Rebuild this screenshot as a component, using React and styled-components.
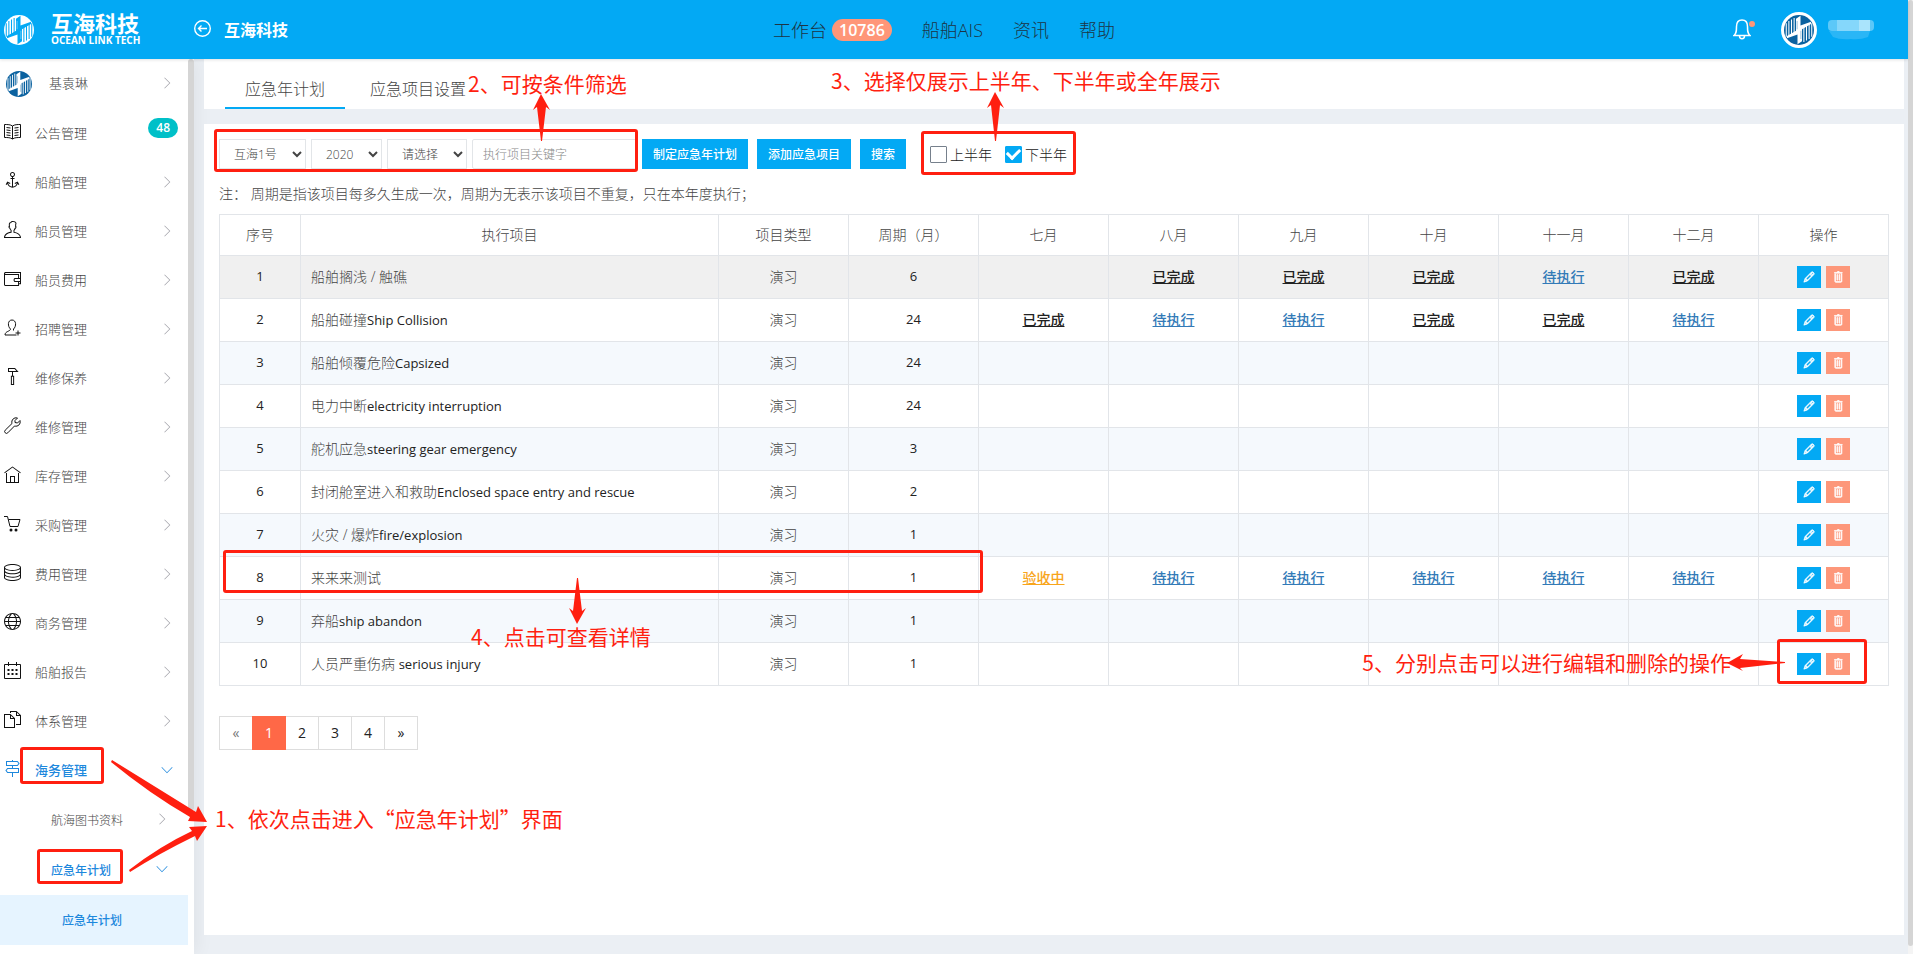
import React, { useState } from "react";
import styled, { createGlobalStyle, css } from "styled-components";
import {
    TfiAnchor,
    TfiAngleDown,
    TfiAngleRight,
    TfiDirectionAlt,
    TfiFiles,
    TfiHome,
    TfiHummer,
    TfiPencil,
    TfiServer,
    TfiTrash,
    TfiUser,
    TfiWallet,
    TfiWorld,
} from "react-icons/tfi";

const GlobalStyle = createGlobalStyle`
    * {
        box-sizing: border-box;
    }

    body {
        margin: 0;
        background-color: #ebeff4;
        color: #444;
        font-family: "Open Sans", "Noto Sans CJK SC", sans-serif;
        font-size: 14px;
        font-weight: 300;
    }

    a {
        color: inherit;
        text-decoration: none;
    }

    button, input, select {
        font-family: inherit;
        font-weight: inherit;
    }
`;

const Page = styled.div`
    position: relative;
    display: flex;
    min-height: 100vh;
`;

const Screen = styled.div`
    display: flex;
    flex: 1;
    flex-direction: column;
    min-width: 0;
`;

const PageTrack = styled.div`
    display: flex;
    width: 5px;
    padding-bottom: 8px;
    background-color: #f4f4f4;
`;

const SideTrack = styled.div`
    width: 6px;
`;

const TrackThumb = styled.div`
    flex: 1;
    height: ${({ $size }) => $size};
    border-radius: 3px;
    background-color: #d5d5d5;
`;

/* header */

const Header = styled.header`
    position: relative;
    z-index: 2;
    display: grid;
    grid-template-columns: 1fr auto 1fr;
    align-items: center;
    height: 59px;
    padding-right: 20px;
    background-color: #03a9f4;
    box-shadow: 0 1px 3px rgba(0, 0, 0, 0.12);
`;

const HeaderLeft = styled.div`
    display: flex;
    align-items: center;
    color: white;
`;

const Brand = styled.a`
    display: flex;
    align-items: center;
    width: 194px;
    padding-left: 4px;
    gap: 17px;
`;

const BrandName = styled.span`
    display: flex;
    flex-direction: column;
    font-size: 22px;
    font-weight: 700;
    line-height: 20px;

    small {
        font-size: 10px;
        line-height: 14px;
        white-space: nowrap;
    }
`;

const BackLink = styled.a`
    display: flex;
    align-items: center;
    gap: 13px;
    padding-bottom: 2px;
    font-size: 16px;
    font-weight: 700;
`;

const HeaderNav = styled.nav`
    display: flex;
    gap: 30px;
    padding-bottom: 2px;
    color: #1d3444;
    font-size: 18px;

    a {
        display: flex;
        align-items: center;
        gap: 5px;
    }
`;

const CountBadge = styled.span`
    margin-top: 2px;
    padding: 0 7px;
    border-radius: 11px;
    background-color: #ff9678;
    color: white;
    font-size: 16px;
    font-weight: 600;
    line-height: 22px;
`;

const HeaderRight = styled.div`
    display: flex;
    align-items: center;
    justify-content: flex-end;
    padding-right: 14px;
    color: white;
`;

const BellButton = styled.button`
    position: relative;
    display: flex;
    margin-right: 30px;
    padding: 0;
    border: 0;
    background: none;
    color: white;

    &::after {
        content: "";
        position: absolute;
        top: 2px;
        right: -4px;
        width: 6px;
        height: 6px;
        border-radius: 50%;
        background-color: #ff9678;
    }
`;

const Avatar = styled.span`
    display: flex;
    margin-right: 11px;
    border: 3px solid white;
    border-radius: 50%;
    background-color: white;
`;

/* side menu */

const Body = styled.div`
    display: flex;
    flex: 1;
`;

const Sidebar = styled.aside`
    display: flex;
    width: 194px;
    background-color: white;
    box-shadow: 4px 0 16px rgba(0, 0, 0, 0.05);
`;

const Menu = styled.nav`
    flex: 1;
`;

const MenuLabel = styled.span`
    flex: 1;
`;

const MenuItem = styled.a`
    display: flex;
    align-items: center;
    height: 50px;
    padding: 0 15px 0 4px;
    font-size: 13px;

    ${MenuLabel} {
        padding-bottom: 4px;
    }

    ${({ $level }) => $level === 1 && css`
        height: 49px;

        ${MenuLabel} {
            padding-bottom: 2px;
        }
    `}

    ${({ $level }) => $level > 1 && css`
        padding: 0 20px 0 ${$level === 2 ? 51 : 62}px;
        font-size: 12px;

        ${MenuLabel} {
            padding: 0;
        }
    `}

    ${({ $active }) => $active && css`
        color: #1e88dd;
        font-weight: 500;
    `}

    ${({ $selected }) => $selected && css`
        background-color: #e6f4ff;
    `}
`;

const MenuIcon = styled.span`
    display: flex;
    width: 31px;
    padding-bottom: 4px;
    color: ${({ $active }) => ($active ? "#1e88dd" : "#111")};
`;

const UserLogo = styled.span`
    display: flex;
    width: 45px;
    padding-left: 2px;
`;

const MenuArrow = styled.span`
    display: flex;
    padding-bottom: 2px;
    color: ${({ $active }) => ($active ? "#1e88dd" : "#a4a4ac")};
`;

const MenuBadge = styled.span`
    margin: 0 -5px 12px 0;
    padding: 0 8px;
    border-radius: 10px;
    background-color: #00c0c8;
    color: white;
    font-size: 12px;
    font-weight: 600;
    line-height: 20px;
`;

/* content */

const Content = styled.main`
    display: flex;
    flex: 1;
    flex-direction: column;
    gap: 15px;
    min-width: 0;
    padding: 0 4px 19px 10px;
`;

const Tabs = styled.div`
    display: flex;
    gap: 5px;
    height: 50px;
    padding-left: 21px;
    background-color: white;
`;

const Tab = styled.button`
    padding: 10px 20px 0;
    border: 0;
    border-bottom: 2px solid ${({ $active }) => ($active ? "#03a9f4" : "transparent")};
    background: none;
    color: #444;
    font-size: 16px;
`;

const Card = styled.section`
    flex: 1;
    padding: 15px;
    background-color: white;
`;

const Toolbar = styled.form`
    display: flex;
    align-items: center;
    gap: 5px;
`;

const Select = styled.select`
    width: ${({ $width }) => $width}px;
    height: 30px;
    padding: 0 0 0 10px;
    border: 1px solid #e2e5e8;
    border-radius: 0;
    background-color: white;
    color: #444;
    font-size: 12px;
`;

const KeywordInput = styled.input`
    width: 165px;
    height: 30px;
    padding: 0 10px;
    border: 1px solid #e2e5e8;
    border-radius: 2px;
    font-size: 12px;

    &::placeholder {
        color: #888;
    }
`;

const ButtonGroup = styled.div`
    display: flex;
    gap: 9px;
    margin-right: 19px;
`;

const PrimaryButton = styled.button`
    height: 30px;
    padding: 0 11px;
    border: 0;
    background-color: #03a9f4;
    color: white;
    font-size: 12px;
    font-weight: 500;
`;

const CheckLabel = styled.label`
    display: flex;
    align-items: center;
    gap: 3px;
    margin-right: 8px;
    color: #222;
`;

const CheckBox = styled.input`
    appearance: none;
    display: grid;
    place-items: center;
    width: 17px;
    height: 17px;
    margin: 0;
    border: 1px solid #76808c;
    border-radius: 1px;
    background-color: white;

    &:checked {
        border-color: #03a9f4;
        background-color: #03a9f4;
    }

    &:checked::after {
        content: "";
        width: 10px;
        height: 6px;
        margin-bottom: 3px;
        border: solid white;
        border-width: 0 0 3px 3px;
        transform: rotate(-45deg);
    }
`;

const Note = styled.p`
    margin: 15px 0 10px;
    line-height: 20px;
`;

const PlanTable = styled.table`
    width: 100%;
    border-collapse: collapse;
    table-layout: fixed;

    th, td {
        padding: 0 0 2px;
        border: 1px solid #e2e5e9;
        text-align: center;
    }

    th {
        height: 41px;
        font-weight: inherit;
    }

    td {
        height: 43px;
        padding-bottom: 3px;
    }

    td:nth-child(2) {
        padding-left: 10px;
        text-align: left;
    }

    td:last-child {
        padding: 0;
    }

    tbody tr:nth-child(odd) {
        background-color: #f5f9fd;
    }

    tbody tr:first-child {
        background-color: #f0f0f0;
    }
`;

const Figure = styled.td`
    color: #222;
    font-size: 13px;
    font-weight: 400;
`;

const Latin = styled.span`
    color: #222;
    font-size: 13px;
    font-weight: 400;
`;

const StatusLink = styled.a`
    color: ${({ $color }) => $color};
    font-weight: 500;
    text-decoration: underline;
`;

const Actions = styled.div`
    display: flex;
    justify-content: center;
    gap: 5px;
`;

const ActionButton = styled.button`
    display: flex;
    align-items: center;
    justify-content: center;
    width: 24px;
    height: 22px;
    padding: 0;
    border: 0;
    background-color: ${({ $color }) => $color};
    color: white;

    svg {
        stroke: white;
        stroke-width: 1;
    }
`;

const Pagination = styled.nav`
    display: flex;
    margin-top: 30px;
`;

const PageLink = styled.a`
    width: 34px;
    margin-right: -1px;
    border: 1px solid #ddd;
    color: ${({ $muted }) => ($muted ? "#777" : "#222")};
    font-weight: 400;
    line-height: 32px;
    text-align: center;

    ${({ $active }) => $active && css`
        position: relative;
        border-color: #ff6847;
        background-color: #ff6847;
        color: white;
    `}
`;

/* guide marks lying over the page */

const Guide = styled.div`
    position: absolute;
    inset: 0;
    z-index: 3;
    overflow: hidden;
    color: #ff1f10;
    font-family: "Noto Sans CJK SC", sans-serif;
    font-size: 21px;
    font-weight: 400;
    line-height: 30px;
    pointer-events: none;
`;

const place = css`
    position: absolute;
    top: ${({ $top }) => $top}px;
    ${({ $left, $right }) => ($right === undefined ? `left: ${$left}px;` : `right: ${$right}px;`)}
`;

const GuideBox = styled.div`
    ${place}
    width: ${({ $width }) => $width}px;
    height: ${({ $height }) => $height}px;
    border: 3px solid #ff1f10;
    border-radius: 3px;
`;

const GuideText = styled.p`
    ${place}
    margin: 0;
    white-space: nowrap;
`;

const GuideArrow = styled.svg`
    ${place}
    fill: #ff1f10;
`;

/* icons that the package draws differently or lacks */

const LineIcon = ({ size = 17, strokeWidth = 1, children }) => (
    <svg width={size} height={size} viewBox="0 0 17 17" fill="none" stroke="currentColor" strokeWidth={strokeWidth}>
        {children}
    </svg>
);

const BookIcon = () => (
    <LineIcon>
        <path d="M8.500 3C6.500 1.500 3.500 1.500 .5 1.500V14.500C3.500 14.500 6.500 14.500 8.500 16C10.500 14.500 13.500 14.500 16.500 14.500V1.500C13.500 1.500 10.500 1.500 8.500 3ZM8.500 3V16" />
        <path d="M2.500 4.500L6.500 5M2.500 7L6.500 7.500M2.500 9.500L6.500 10M2.500 12L6.500 12.500M14.500 4.500L10.500 5M14.500 7L10.500 7.500M14.500 9.500L10.500 10M14.500 12L10.500 12.500" />
    </LineIcon>
);

const UserPlusIcon = () => (
    <LineIcon>
        <path d="M9.500 11.500V10C12.500 7.500 12.500 1 8 1S3.500 7.500 6.500 10C6.500 12.500 1 12 1 16H12.500M14 11.500V16.500M11.500 14H16.500" />
    </LineIcon>
);

const WrenchIcon = () => (
    <LineIcon>
        <path d="M13.500 1C10 0 7 3 8 6.500L1.200 13.200A1.800 1.800 0 0 0 3.800 15.800L10.500 9C14 10 17 7 16 3.500L13.500 6L11 5.500V3.500Z" />
    </LineIcon>
);

const CartIcon = () => (
    <LineIcon>
        <path d="M0 1.500H3.500L6 11.500H14L16 4.500H4.500" />
        <circle cx="7" cy="15" r="1.500" fill="currentColor" stroke="none" />
        <circle cx="12" cy="15" r="1.500" fill="currentColor" stroke="none" />
    </LineIcon>
);

const CalendarIcon = () => (
    <LineIcon>
        <path d="M.5 2.500H16.500V16.500H.5ZM4.500 0V4M12.500 0V4" />
        <path d="M3.500 8H13.500M3.500 12H13.500" strokeWidth="2" strokeDasharray="2 2" />
    </LineIcon>
);

const BackIcon = () => (
    <LineIcon strokeWidth={1.4}>
        <circle cx="8.500" cy="8.500" r="7.800" />
        <path d="M13 8.500H4.500M7.500 5.500L4.500 8.500L7.500 11.500" />
    </LineIcon>
);

const BellIcon = () => (
    <svg width="18" height="21" viewBox="0 0 18 21" fill="none" stroke="currentColor" strokeWidth="1.500">
        <path d="M1 16.500C3.500 14.500 3.500 12 3.500 7.500C3.500 3.500 5.500 1 9 1S14.500 3.500 14.500 7.500C14.500 12 14.500 14.500 17 16.500ZM6.500 17C6.500 20.500 11.500 20.500 11.500 17" />
    </svg>
);

const Logo = ({ size, color = "#0b62a0", background = "white" }) => (
    <svg width={size} height={size} viewBox="0 0 40 40" aria-hidden="true">
        <circle cx="20" cy="20" r="20" fill={color} />
        <path
            d="M3 11V29M6.500 8V28M10 6V26M13.500 4V25M37 29V11M33.500 32V12M30 34V14M26.500 36V15"
            fill="none"
            stroke={background}
            strokeWidth="1.400"
        />
        <path d="M16 5L22 1V14L36 9V12L24 19V35L18 39V26L4 31V28L16 21Z" fill={background} />
        <path d="M17.500 19V8M22.500 21V32" stroke={color} strokeWidth="1" opacity="0.500" />
    </svg>
);

const MaskedName = () => (
    <svg width="46" height="20" viewBox="0 0 46 20" aria-hidden="true">
        <rect width="46" height="11" rx="4" fill="#5cc8f8" />
        <rect x="9" width="22" height="11" fill="#85d7fb" />
        <rect x="31" width="11" height="11" fill="#aae4fc" />
        <path d="M1 11H42L40 17Q32 20 23 19Q12 20 5 17Z" fill="#2ab6f6" />
    </svg>
);

const ItemArrow = ({ open, active }) => (
    <MenuArrow $active={active}>
        {open ? <TfiAngleDown size={12} /> : <TfiAngleRight size={12} />}
    </MenuArrow>
);

const menuItems = [
    { label: "公告管理", icon: BookIcon, badge: 48 },
    { label: "船舶管理", icon: TfiAnchor },
    { label: "船员管理", icon: TfiUser },
    { label: "船员费用", icon: TfiWallet },
    { label: "招聘管理", icon: UserPlusIcon },
    { label: "维修保养", icon: TfiHummer },
    { label: "维修管理", icon: WrenchIcon },
    { label: "库存管理", icon: TfiHome },
    { label: "采购管理", icon: CartIcon },
    { label: "费用管理", icon: TfiServer },
    { label: "商务管理", icon: TfiWorld },
    { label: "船舶报告", icon: CalendarIcon },
    { label: "体系管理", icon: TfiFiles },
    { label: "海务管理", icon: TfiDirectionAlt, active: true },
];

const columns = ["序号", "执行项目", "项目类型", "周期（月）", "七月", "八月", "九月", "十月", "十一月", "十二月", "操作"];

const STATUS = {
    done: { label: "已完成", color: "#222" },
    todo: { label: "待执行", color: "#337ab7" },
    check: { label: "验收中", color: "#f8a51b" },
};

const noStatus = ["", "", "", "", "", ""];

const plans = [
    { name: "船舶搁浅 / 触礁", cycle: 6, months: ["", "done", "done", "done", "todo", "done"] },
    { name: "船舶碰撞", latin: "Ship Collision", cycle: 24, months: ["done", "todo", "todo", "done", "done", "todo"] },
    { name: "船舶倾覆危险", latin: "Capsized", cycle: 24, months: noStatus },
    { name: "电力中断", latin: "electricity interruption", cycle: 24, months: noStatus },
    { name: "舵机应急", latin: "steering gear emergency", cycle: 3, months: noStatus },
    { name: "封闭舱室进入和救助", latin: "Enclosed space entry and rescue", cycle: 2, months: noStatus },
    { name: "火灾 / 爆炸", latin: "fire/explosion", cycle: 1, months: noStatus },
    { name: "来来来测试", cycle: 1, months: ["check", "todo", "todo", "todo", "todo", "todo"] },
    { name: "弃船", latin: "ship abandon", cycle: 1, months: noStatus },
    { name: "人员严重伤病 ", latin: "serious injury", cycle: 1, months: noStatus },
];

const TopBar = () => (
    <Header>
        <HeaderLeft>
            <Brand href="#">
                <Logo size={30} color="white" background="#03a9f4" />
                <BrandName>
                    互海科技
                    <small>OCEAN LINK TECH</small>
                </BrandName>
            </Brand>
            <BackLink href="#">
                <BackIcon />
                互海科技
            </BackLink>
        </HeaderLeft>
        <HeaderNav>
            <a href="#">工作台<CountBadge>10786</CountBadge></a>
            <a href="#">船舶AIS</a>
            <a href="#">资讯</a>
            <a href="#">帮助</a>
        </HeaderNav>
        <HeaderRight>
            <BellButton type="button" aria-label="消息"><BellIcon /></BellButton>
            <Avatar><Logo size={30} /></Avatar>
            <MaskedName />
        </HeaderRight>
    </Header>
);

const SideMenu = () => (
    <Sidebar>
        <Menu>
            <MenuItem href="#">
                <UserLogo><Logo size={26} /></UserLogo>
                <MenuLabel>基袁琳</MenuLabel>
                <ItemArrow />
            </MenuItem>
            {menuItems.map(({ label, icon: Icon, badge, active }) => (
                <MenuItem key={label} href="#" $level={1} $active={active}>
                    <MenuIcon $active={active}><Icon size={17} /></MenuIcon>
                    <MenuLabel>{label}</MenuLabel>
                    {badge ? <MenuBadge>{badge}</MenuBadge> : <ItemArrow open={active} active={active} />}
                </MenuItem>
            ))}
            <MenuItem href="#" $level={2}>
                <MenuLabel>航海图书资料</MenuLabel>
                <ItemArrow />
            </MenuItem>
            <MenuItem href="#" $level={2} $active>
                <MenuLabel>应急年计划</MenuLabel>
                <ItemArrow open active />
            </MenuItem>
            <MenuItem href="#" $level={3} $active $selected>应急年计划</MenuItem>
        </Menu>
        <SideTrack><TrackThumb $size="84%" /></SideTrack>
    </Sidebar>
);

const PlanRow = ({ index, plan }) => (
    <tr>
        <Figure>{index}</Figure>
        <td>{plan.name}{plan.latin && <Latin>{plan.latin}</Latin>}</td>
        <td>演习</td>
        <Figure>{plan.cycle}</Figure>
        {plan.months.map((status, i) => (
            <td key={i}>
                {status && <StatusLink href="#" $color={STATUS[status].color}>{STATUS[status].label}</StatusLink>}
            </td>
        ))}
        <td>
            <Actions>
                <ActionButton type="button" aria-label="编辑" $color="#03a9f4">
                    <TfiPencil size={12} />
                </ActionButton>
                <ActionButton type="button" aria-label="删除" $color="#fd977a">
                    <TfiTrash size={12} />
                </ActionButton>
            </Actions>
        </td>
    </tr>
);

const GuideLayer = () => (
    <Guide>
        <GuideBox $left={20} $top={747} $width={84} $height={37} />
        <GuideBox $left={37} $top={849} $width={86} $height={35} />
        <GuideArrow $left={109} $top={759} width="100" height="114" viewBox="109 759 100 114">
            <path d="M112 760L196 812L198 806L207 822L188 821L190 817Q150 794 111 762Z" />
            <path d="M129 870Q160 846 192 831L189 827L207 826L197 841L195 836Q160 853 130 872Z" />
        </GuideArrow>
        <GuideText $left={215} $top={803}>1、依次点击进入“应急年计划”界面</GuideText>

        <GuideBox $left={214} $top={129} $width={424} $height={43} />
        <GuideArrow $left={533} $top={94} width="18" height="48" viewBox="0 0 18 48">
            <path d="M8 0L17 16L13 13L9 47H8L4 13L0 16Z" />
        </GuideArrow>
        <GuideText $left={468} $top={68}>2、可按条件筛选</GuideText>

        <GuideBox $left={921} $top={131} $width={155} $height={44} />
        <GuideArrow $left={987} $top={92} width="18" height="50" viewBox="0 0 18 50">
            <path d="M8 0L17 16L13 13L9 49H8L4 13L0 16Z" />
        </GuideArrow>
        <GuideText $left={831} $top={65}>3、选择仅展示上半年、下半年或全年展示</GuideText>

        <GuideBox $left={223} $top={550} $width={760} $height={43} />
        <GuideArrow $left={569} $top={578} width="18" height="46" viewBox="0 0 18 46">
            <path d="M8 46L17 30L13 33L9 0H8L4 33L0 30Z" />
        </GuideArrow>
        <GuideText $left={471} $top={621}>4、点击可查看详情</GuideText>

        <GuideBox $right={46} $top={639} $width={90} $height={45} />
        <GuideArrow $right={128} $top={654} width="58" height="18" viewBox="0 0 58 18">
            <path d="M0 9L16 0L13 5L58 8V9L13 14L16 17Z" />
        </GuideArrow>
        <GuideText $right={182} $top={647}>5、分别点击可以进行编辑和删除的操作</GuideText>
    </Guide>
);

const App = () => {
    const [firstHalf, setFirstHalf] = useState(false);
    const [secondHalf, setSecondHalf] = useState(true);

    return (
        <Page>
            <GlobalStyle />
            <Screen>
                <TopBar />
                <Body>
                    <SideMenu />
                    <Content>
                        <Tabs>
                            <Tab type="button" $active>应急年计划</Tab>
                            <Tab type="button">应急项目设置</Tab>
                        </Tabs>
                        <Card>
                            <Toolbar onSubmit={(e) => e.preventDefault()}>
                                <Select $width={87} aria-label="船舶"><option>互海1号</option></Select>
                                <Select $width={71} aria-label="年份"><option>2020</option></Select>
                                <Select $width={80} aria-label="项目类型"><option>请选择</option></Select>
                                <KeywordInput aria-label="执行项目关键字" placeholder="执行项目关键字" />
                                <ButtonGroup>
                                    <PrimaryButton type="button">制定应急年计划</PrimaryButton>
                                    <PrimaryButton type="button">添加应急项目</PrimaryButton>
                                    <PrimaryButton type="submit">搜索</PrimaryButton>
                                </ButtonGroup>
                                <CheckLabel>
                                    <CheckBox type="checkbox" checked={firstHalf} onChange={() => setFirstHalf(!firstHalf)} />
                                    上半年
                                </CheckLabel>
                                <CheckLabel>
                                    <CheckBox type="checkbox" checked={secondHalf} onChange={() => setSecondHalf(!secondHalf)} />
                                    下半年
                                </CheckLabel>
                            </Toolbar>
                            <Note>注： 周期是指该项目每多久生成一次，周期为无表示该项目不重复，只在本年度执行；</Note>
                            <PlanTable>
                                <colgroup>
                                    <col width="81" />
                                    <col />
                                    <col span="9" width="130" />
                                </colgroup>
                                <thead>
                                    <tr>{columns.map((name) => <th key={name}>{name}</th>)}</tr>
                                </thead>
                                <tbody>
                                    {plans.map((plan, i) => <PlanRow key={plan.name} index={i + 1} plan={plan} />)}
                                </tbody>
                            </PlanTable>
                            <Pagination aria-label="分页">
                                <PageLink href="#" $muted>«</PageLink>
                                <PageLink href="#" $active>1</PageLink>
                                <PageLink href="#">2</PageLink>
                                <PageLink href="#">3</PageLink>
                                <PageLink href="#">4</PageLink>
                                <PageLink href="#">»</PageLink>
                            </Pagination>
                        </Card>
                    </Content>
                </Body>
            </Screen>
            <PageTrack><TrackThumb $size="auto" /></PageTrack>
            <GuideLayer />
        </Page>
    );
};

export default App;
